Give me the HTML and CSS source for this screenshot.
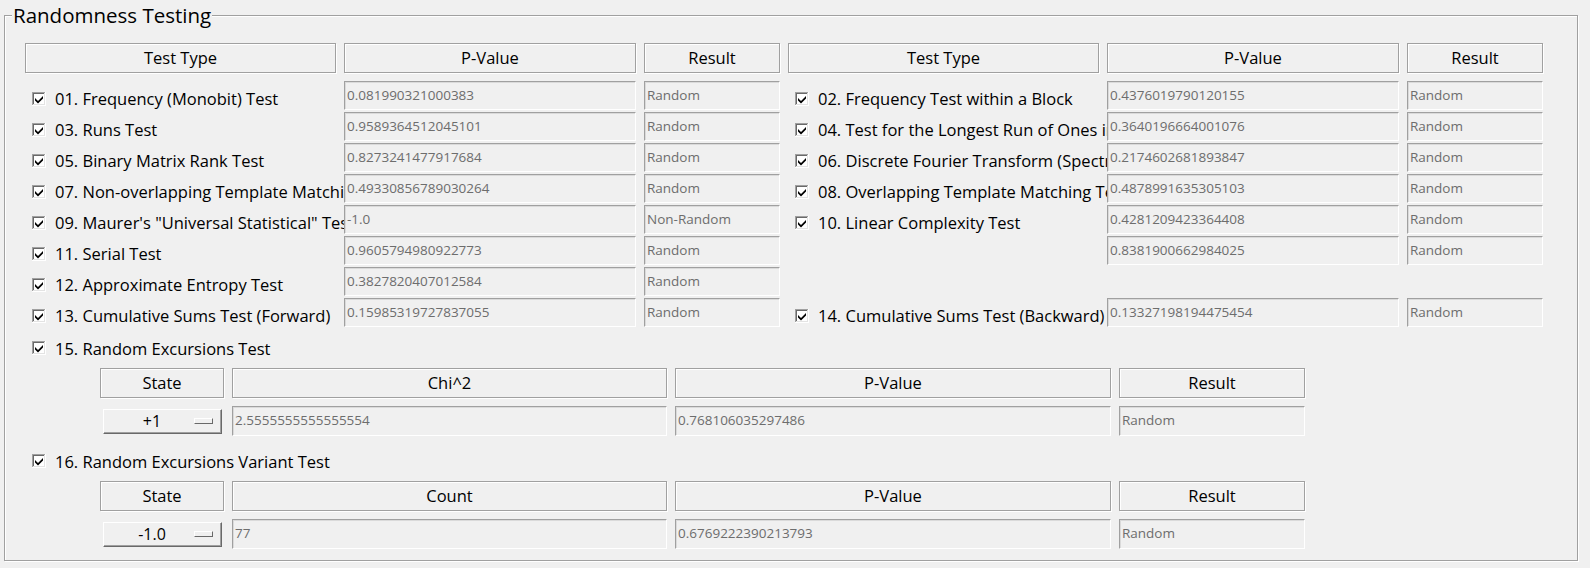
FILE: index.html
```html
<!DOCTYPE html>
<html lang="en">
<head>
<meta charset="utf-8">
<title>Randomness Testing</title>
<link rel="stylesheet" href="styles.css">
</head>
<body>
<svg class="defs" aria-hidden="true">
  <symbol id="chk" viewBox="0 0 14 14">
    <rect x="0" y="0" width="14" height="14" fill="#ffffff"/>
    <rect x="0" y="0" width="13" height="1" fill="#a0a0a0"/>
    <rect x="0" y="0" width="1" height="13" fill="#a0a0a0"/>
    <rect x="1" y="1" width="11" height="1" fill="#696969"/>
    <rect x="1" y="1" width="1" height="11" fill="#696969"/>
    <rect x="1" y="12" width="12" height="1" fill="#e3e3e3"/>
    <rect x="12" y="1" width="1" height="12" fill="#e3e3e3"/>
    <path d="M3 6 L6 9 L11 4 V6.5 L6 11.5 L3 8.5 Z" fill="#000000"/>
  </symbol>
</svg>
<fieldset class="frame">
  <legend class="title">Randomness Testing</legend>
  <div class="content">
    <div class="main-grid">
      <div class="hdr">Test Type</div>
      <div class="hdr">P-Value</div>
      <div class="hdr">Result</div>
      <div class="hdr">Test Type</div>
      <div class="hdr">P-Value</div>
      <div class="hdr">Result</div>

      <div class="lbl"><svg class="cb"><use href="#chk"/></svg><span>01. Frequency (Monobit) Test</span></div>
      <div class="ent">0.081990321000383</div>
      <div class="ent">Random</div>
      <div class="lbl"><svg class="cb"><use href="#chk"/></svg><span>02. Frequency Test within a Block</span></div>
      <div class="ent">0.4376019790120155</div>
      <div class="ent">Random</div>

      <div class="lbl"><svg class="cb"><use href="#chk"/></svg><span>03. Runs Test</span></div>
      <div class="ent">0.9589364512045101</div>
      <div class="ent">Random</div>
      <div class="lbl"><svg class="cb"><use href="#chk"/></svg><span>04. Test for the Longest Run of Ones in a Block</span></div>
      <div class="ent">0.3640196664001076</div>
      <div class="ent">Random</div>

      <div class="lbl"><svg class="cb"><use href="#chk"/></svg><span>05. Binary Matrix Rank Test</span></div>
      <div class="ent">0.8273241477917684</div>
      <div class="ent">Random</div>
      <div class="lbl"><svg class="cb"><use href="#chk"/></svg><span>06. Discrete Fourier Transform (Spectral) Test</span></div>
      <div class="ent">0.2174602681893847</div>
      <div class="ent">Random</div>

      <div class="lbl"><svg class="cb"><use href="#chk"/></svg><span>07. Non-overlapping Template Matching Test</span></div>
      <div class="ent">0.49330856789030264</div>
      <div class="ent">Random</div>
      <div class="lbl"><svg class="cb"><use href="#chk"/></svg><span>08. Overlapping Template Matching Test</span></div>
      <div class="ent">0.4878991635305103</div>
      <div class="ent">Random</div>

      <div class="lbl"><svg class="cb"><use href="#chk"/></svg><span>09. Maurer's "Universal Statistical" Test</span></div>
      <div class="ent">-1.0</div>
      <div class="ent">Non-Random</div>
      <div class="lbl"><svg class="cb"><use href="#chk"/></svg><span>10. Linear Complexity Test</span></div>
      <div class="ent">0.4281209423364408</div>
      <div class="ent">Random</div>

      <div class="lbl"><svg class="cb"><use href="#chk"/></svg><span>11. Serial Test</span></div>
      <div class="ent">0.9605794980922773</div>
      <div class="ent">Random</div>
      <div class="empty"></div>
      <div class="ent">0.8381900662984025</div>
      <div class="ent">Random</div>

      <div class="lbl"><svg class="cb"><use href="#chk"/></svg><span>12. Approximate Entropy Test</span></div>
      <div class="ent">0.3827820407012584</div>
      <div class="ent">Random</div>
      <div class="empty"></div>
      <div class="empty"></div>
      <div class="empty"></div>

      <div class="lbl"><svg class="cb"><use href="#chk"/></svg><span>13. Cumulative Sums Test (Forward)</span></div>
      <div class="ent">0.15985319727837055</div>
      <div class="ent">Random</div>
      <div class="lbl"><svg class="cb"><use href="#chk"/></svg><span>14. Cumulative Sums Test (Backward)</span></div>
      <div class="ent">0.13327198194475454</div>
      <div class="ent">Random</div>
    </div>

    <div class="sec sec-first"><svg class="cb"><use href="#chk"/></svg><span>15. Random Excursions Test</span></div>
    <div class="sub-grid">
      <div class="hdr">State</div>
      <div class="hdr">Chi^2</div>
      <div class="hdr">P-Value</div>
      <div class="hdr">Result</div>
      <div class="dd-cell"><div class="dd"><span class="dd-text">+1</span><span class="dd-ind"></span></div></div>
      <div class="ent">2.5555555555555554</div>
      <div class="ent">0.768106035297486</div>
      <div class="ent">Random</div>
    </div>

    <div class="sec sec-second"><svg class="cb"><use href="#chk"/></svg><span>16. Random Excursions Variant Test</span></div>
    <div class="sub-grid">
      <div class="hdr">State</div>
      <div class="hdr">Count</div>
      <div class="hdr">P-Value</div>
      <div class="hdr">Result</div>
      <div class="dd-cell"><div class="dd"><span class="dd-text">-1.0</span><span class="dd-ind"></span></div></div>
      <div class="ent">77</div>
      <div class="ent">0.6769222390213793</div>
      <div class="ent">Random</div>
    </div>
  </div>
</fieldset>
</body>
</html>
```

FILE: styles.css
```css
* {
  box-sizing: border-box;
}

html, body {
  margin: 0;
  padding: 0;
  background: #f0f0f0;
}

body {
  font-family: "Open Sans", "Noto Sans", "DejaVu Sans", sans-serif;
  color: #000;
  width: 1590px;
  height: 568px;
  overflow: hidden;
}

.defs {
  position: absolute;
  width: 0;
  height: 0;
  overflow: hidden;
}

.frame {
  margin: 3px 0 0 4px;
  width: 1574px;
  padding: 0 0 11px 7px;
  border: 1px solid #a0a0a0;
  box-shadow: inset 1px 1px 0 #ffffff, 1px 1px 0 #ffffff;
  min-width: 0;
}

.title {
  font-size: 20.5px;
  line-height: 25px;
  padding: 0 1px;
  background: #f0f0f0;
  color: #000;
}

.content {
  margin-left: 13px;
  padding-top: 15px;
}

.main-grid {
  display: grid;
  grid-template-columns: 311px 292px 136px 311px 292px 136px;
  grid-template-rows: 36px repeat(8, 29px);
  column-gap: 8px;
  row-gap: 2px;
}

.hdr {
  height: 30px;
  align-self: start;
  border: 1px solid #a0a0a0;
  box-shadow: inset 1px 1px 0 #ffffff, 1px 1px 0 #ffffff;
  font-size: 16.5px;
  line-height: 27px;
  text-align: center;
  white-space: nowrap;
  overflow: hidden;
}

.ent {
  border-style: solid;
  border-width: 1px;
  border-color: #a0a0a0 #ffffff #ffffff #a0a0a0;
  box-shadow: inset 1px 1px 0 #dadada;
  font-size: 13.5px;
  line-height: 26px;
  color: #6d6d6d;
  padding-left: 2px;
  white-space: nowrap;
  overflow: hidden;
}

.lbl {
  display: flex;
  align-items: center;
  padding-top: 6px;
  padding-left: 7px;
  margin-right: -8px;
  font-size: 16.5px;
  white-space: nowrap;
  overflow: hidden;
}

.cb {
  width: 14px;
  height: 14px;
  flex: none;
  margin-right: 9px;
}

.sec {
  display: flex;
  align-items: center;
  height: 30px;
  padding-left: 7px;
  font-size: 16.5px;
  white-space: nowrap;
}

.sec-first {
  margin-top: 6px;
}

.sec-second {
  margin-top: 10px;
}

.sub-grid {
  display: grid;
  grid-template-columns: 124px 435px 436px 186px;
  grid-template-rows: 30px 30px;
  column-gap: 8px;
  row-gap: 8px;
  margin: 5px 0 0 75px;
}

.sub-grid .ent {
  line-height: 27px;
}

.dd-cell {
  display: flex;
  align-items: center;
  padding-left: 3px;
}

.dd {
  width: 119px;
  height: 25px;
  display: flex;
  align-items: center;
  border-style: solid;
  border-width: 1px;
  border-color: #ffffff #696969 #696969 #ffffff;
  box-shadow: inset -1px -1px 0 #a0a0a0;
  background: #f0f0f0;
}

.dd-text {
  flex: 1;
  text-align: center;
  font-size: 16px;
  padding-left: 6px;
}

.dd-ind {
  width: 19px;
  height: 6px;
  margin-right: 8px;
  border-style: solid;
  border-width: 1px;
  border-color: #ffffff #696969 #696969 #ffffff;
  background: #f0f0f0;
}
```
